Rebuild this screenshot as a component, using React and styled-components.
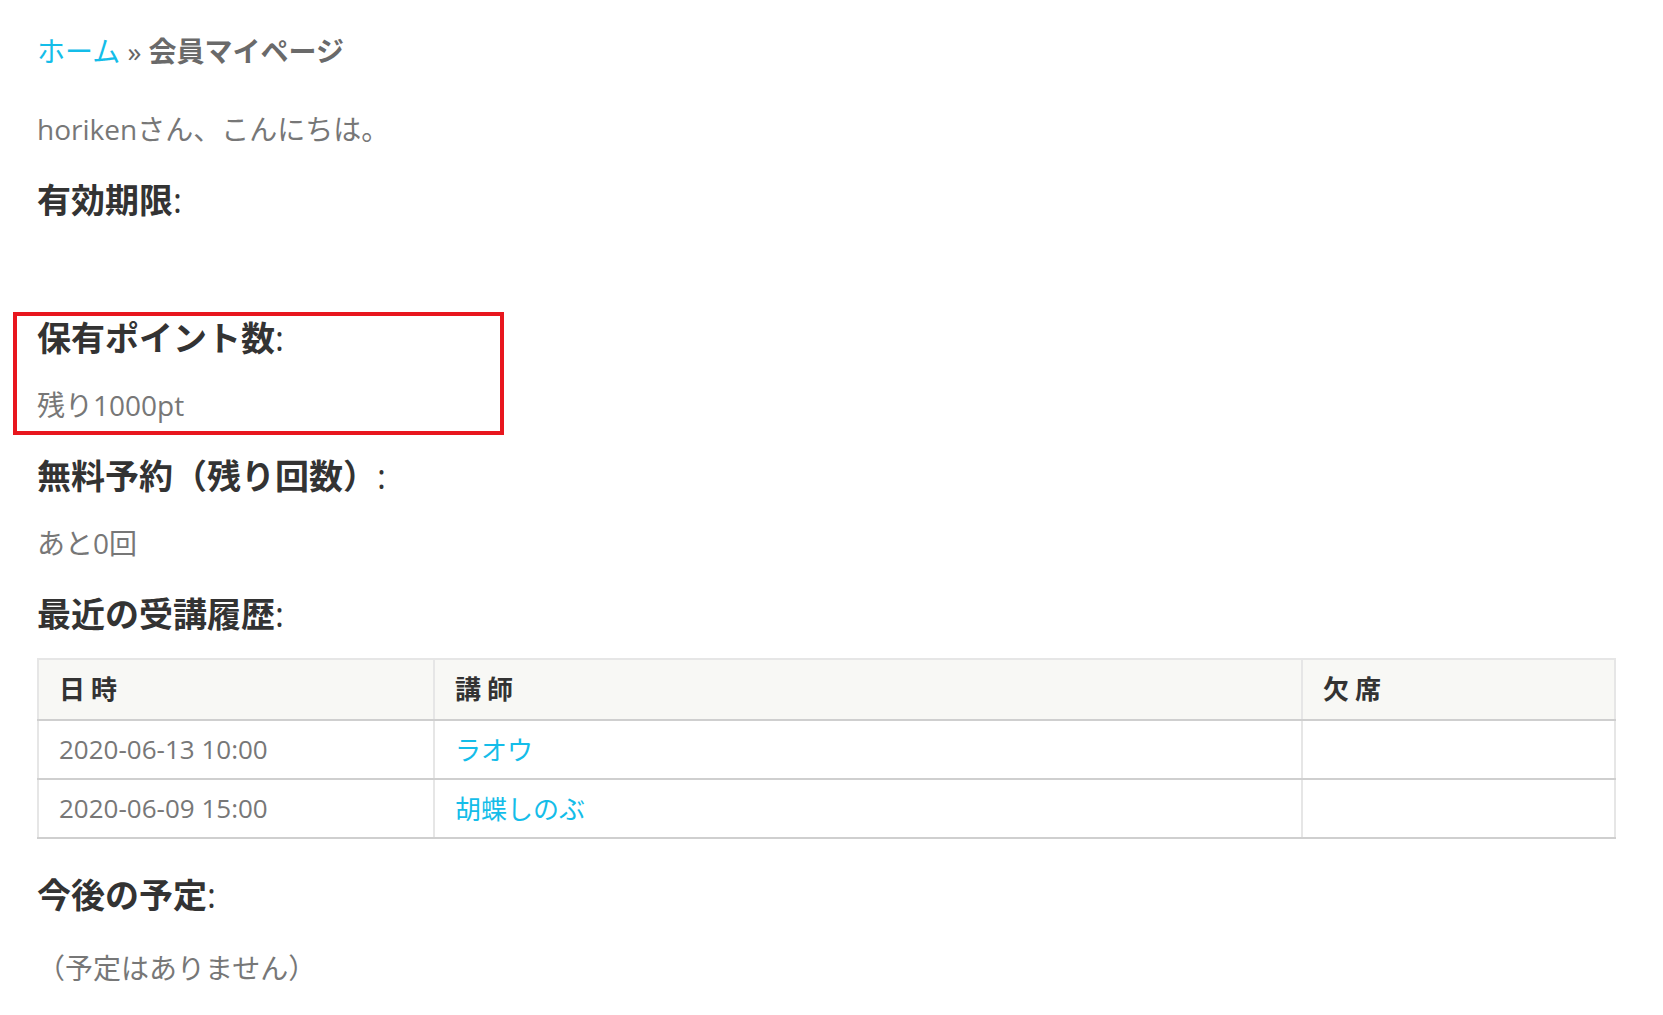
import * as React from 'react'
import styled, {createGlobalStyle} from 'styled-components'

const GlobalStyle = createGlobalStyle`
  html, body {
    margin: 0;
    padding: 0;
    background: #fff;
  }
  body {
    font-family: "Open Sans", "Noto Sans CJK JP", sans-serif;
    color: #777;
  }
`

const history = [
  {date: '2020-06-13 10:00', teacher: 'ラオウ', absent: ''},
  {date: '2020-06-09 15:00', teacher: '胡蝶しのぶ', absent: ''}
]

const Page = styled.div`
  width: 1579px;
  padding: 29px 0 40px 37px;
`

const Breadcrumb = styled.nav`
  font-size: 28px;
  line-height: 44px;
  color: #666;
  margin-bottom: 34px;
`

const Link = styled.a`
  color: #14bde9;
  text-decoration: none;
`

const Current = styled.strong`
  font-weight: 700;
  color: #6a6a6a;
`

// margin-top collapses with the heading's margin-bottom, so $gap is the whole space
const Text = styled.p`
  margin: ${p => p.$gap || 0}px 0 25px;
  font-size: 28px;
  line-height: 44px;
  min-height: 44px;
  color: #777;
`

const Heading = styled.h3`
  margin: 0 0 ${p => p.$after || 21}px;
  font-size: 34px;
  line-height: 48px;
  font-weight: 700;
  color: #333;
`

const Colon = styled.span`
  font-weight: 400;
`

const Highlighted = styled.section`
  position: relative;
`

const Marker = styled.div`
  position: absolute;
  left: -24px;
  top: -2px;
  width: 491px;
  height: 123px;
  box-sizing: border-box;
  border: 4px solid #e8161e;
  pointer-events: none;
`

const Table = styled.table`
  width: 1579px;
  table-layout: fixed;
  border-collapse: collapse;
  border: 2px solid #e6e6e6;
  margin-bottom: 32px;
`

const HeadCell = styled.th`
  background: #f8f8f5;
  text-align: left;
  font-size: 26px;
  font-weight: 700;
  letter-spacing: 6px;
  color: #333;
  height: 56px;
  padding: 0 20px 3px;
  border-left: 2px solid #e6e6e6;
  border-bottom: 2px solid #cfcfcf;
`

const Cell = styled.td`
  font-size: 26px;
  color: #777;
  height: 55px;
  padding: 0 20px 2px;
  border-left: 2px solid #e6e6e6;
  border-bottom: 2px solid #cfcfcf;
`

export default function App () {
  return (
    <Page>
      <GlobalStyle />
      <Breadcrumb>
        <Link href="#">ホーム</Link> » <Current>会員マイページ</Current>
      </Breadcrumb>

      <Text>horikenさん、こんにちは。</Text>

      <Heading>有効期限<Colon>:</Colon></Heading>
      <Text />

      <Highlighted>
        <Heading>保有ポイント数<Colon>:</Colon></Heading>
        <Text>残り1000pt</Text>
        <Marker />
      </Highlighted>

      <Heading>無料予約（残り回数）<Colon>:</Colon></Heading>
      <Text>あと0回</Text>

      <Heading $after={20}>最近の受講履歴<Colon>:</Colon></Heading>
      <Table>
        <colgroup>
          <col style={{width: 396}} />
          <col style={{width: 868}} />
          <col />
        </colgroup>
        <thead>
          <tr>
            <HeadCell>日時</HeadCell>
            <HeadCell>講師</HeadCell>
            <HeadCell>欠席</HeadCell>
          </tr>
        </thead>
        <tbody>
          {history.map(row => (
            <tr key={row.date}>
              <Cell>{row.date}</Cell>
              <Cell><Link href="#">{row.teacher}</Link></Cell>
              <Cell>{row.absent}</Cell>
            </tr>
          ))}
        </tbody>
      </Table>

      <Heading>今後の予定<Colon>:</Colon></Heading>
      <Text $gap={27}>（予定はありません）</Text>
    </Page>
  )
}
